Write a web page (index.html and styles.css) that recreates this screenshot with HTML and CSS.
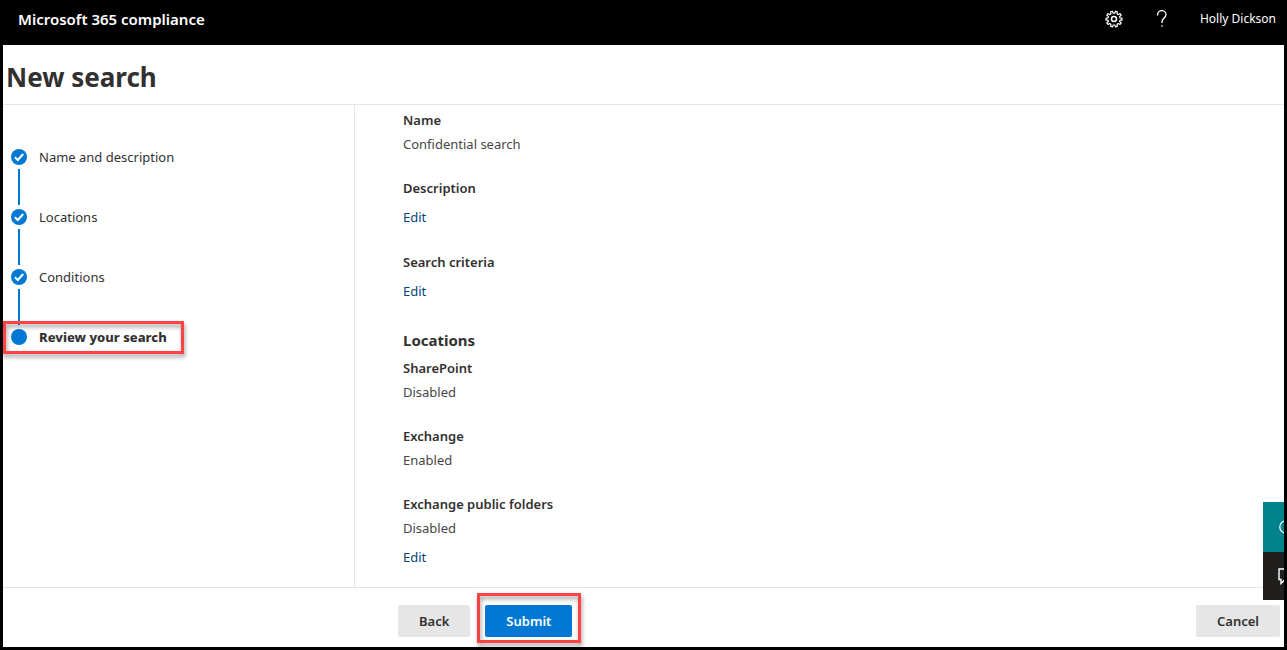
FILE: index.html
```html
<!DOCTYPE html>
<html lang="en">
<head>
<meta charset="utf-8">
<meta name="viewport" content="width=device-width, initial-scale=1">
<title>New search - Microsoft 365 compliance</title>
<link rel="stylesheet" href="styles.css">
</head>
<body>
<header class="topbar">
  <span class="brand">Microsoft 365 compliance</span>
  <button class="icon-button" type="button" aria-label="Settings">
    <svg class="gear" viewBox="0 0 18 18" width="18" height="18" fill="none" stroke="currentColor" stroke-linejoin="round">
      <circle cx="9" cy="9" r="2.5" stroke-width="1.5"/>
      <path stroke-width="1.2" d="M7.6 1.2 8 3.2 10 3.2 10.4 1.2 12.4 1.8 12 3.8 13.2 4.7 15 3.6 16.2 5.3 14.6 6.6 15 8 17 8 17 10.1 15 10.2 14.5 11.6 16.2 12.8 15 14.5 13.2 13.5 12 14.4 12.4 16.3 10.4 16.9 10 15 8 15 7.6 16.9 5.6 16.3 6 14.4 4.8 13.5 3 14.5 1.8 12.8 3.5 11.6 3 10.2 1 10.1 1 8 3 8 3.4 6.6 1.8 5.3 3 3.6 4.8 4.7 6 3.8 5.6 1.8Z"/>
    </svg>
  </button>
  <button class="icon-button" type="button" aria-label="Help">
    <svg viewBox="0 0 18 18" width="18" height="18" fill="none" stroke="currentColor" stroke-width="1.3">
      <path d="M4.6 5.4V4.6A4.2 4 0 0 1 13 4.6C13 8 9 8.4 9 11.4V13M9 15.2V16.8"/>
    </svg>
  </button>
  <button class="account" type="button">Holly Dickson</button>
</header>

<div class="page">
  <h1 class="page-title">New search</h1>

  <div class="wizard">
    <nav class="steps-panel" aria-label="Progress">
      <ol class="steps">
        <li class="step">
          <svg class="marker" viewBox="0 0 16 16"><circle cx="8" cy="8" r="8"/><path d="M3.8 8.2 6.8 11 12.2 5"/></svg>
          <span>Name and description</span>
        </li>
        <li class="step">
          <svg class="marker" viewBox="0 0 16 16"><circle cx="8" cy="8" r="8"/><path d="M3.8 8.2 6.8 11 12.2 5"/></svg>
          <span>Locations</span>
        </li>
        <li class="step">
          <svg class="marker" viewBox="0 0 16 16"><circle cx="8" cy="8" r="8"/><path d="M3.8 8.2 6.8 11 12.2 5"/></svg>
          <span>Conditions</span>
        </li>
        <li class="step step-current" aria-current="step">
          <svg class="marker" viewBox="0 0 16 16"><circle cx="8" cy="8" r="8"/></svg>
          <span>Review your search</span>
        </li>
      </ol>
    </nav>

    <main class="review">
      <section class="group">
        <h3 class="label">Name</h3>
        <p class="value">Confidential search</p>
      </section>
      <section class="group">
        <h3 class="label">Description</h3>
        <a class="edit" href="#">Edit</a>
      </section>
      <section class="group">
        <h3 class="label">Search criteria</h3>
        <a class="edit" href="#">Edit</a>
      </section>
      <h2 class="heading">Locations</h2>
      <section class="group">
        <h3 class="label">SharePoint</h3>
        <p class="value">Disabled</p>
      </section>
      <section class="group">
        <h3 class="label">Exchange</h3>
        <p class="value">Enabled</p>
      </section>
      <section class="group">
        <h3 class="label">Exchange public folders</h3>
        <p class="value">Disabled</p>
        <a class="edit" href="#">Edit</a>
      </section>
    </main>
  </div>

  <footer class="actions">
    <button class="button" type="button">Back</button>
    <span class="submit-wrap"><button class="button button-primary" type="submit">Submit</button></span>
    <button class="button button-cancel" type="button">Cancel</button>
  </footer>

  <aside class="side-tabs">
    <button class="side-tab help-tab" type="button" aria-label="Need help">
      <svg viewBox="0 0 18 18" width="16" height="16"><circle cx="9" cy="9" r="7"/></svg>
    </button>
    <button class="side-tab feedback-tab" type="button" aria-label="Give feedback">
      <svg viewBox="0 0 18 18" width="18" height="18"><path d="M1 2H17V12.5H7L3 16.5V12.5H1Z"/></svg>
    </button>
  </aside>
</div>
</body>
</html>
```
FILE: styles.css
```css
*,
*::before,
*::after {
  box-sizing: border-box;
}

body {
  margin: 0;
  min-height: 100vh;
  display: flex;
  flex-direction: column;
  background: #000;
  color: #323130;
  font: 13px/20px "Noto Sans", "Open Sans", sans-serif;
}

h1, h2, h3, p, ol {
  margin: 0;
  padding: 0;
}

button {
  font: inherit;
  color: inherit;
  border: 0;
  cursor: pointer;
}

.topbar {
  display: flex;
  align-items: center;
  height: 45px;
  padding: 0 11px 8px 18px;
  color: #fff;
}

.brand {
  margin-right: auto;
  font-size: 15px;
  font-weight: 600;
}

.icon-button {
  display: flex;
  justify-content: center;
  width: 48px;
  padding: 0;
  background: none;
}

.account {
  margin-left: 14px;
  padding: 0;
  background: none;
  font-size: 12px;
}

.page {
  position: relative;
  flex: 1;
  display: flex;
  flex-direction: column;
  margin: 0 3px 3px;
  overflow: hidden;
  background: #fff;
}

.page-title {
  padding: 17px 3px 11px;
  border-bottom: 1px solid #e6e6e6;
  font-size: 26px;
  line-height: 31px;
  font-weight: 700;
}

.wizard {
  flex: 1;
  display: grid;
  grid-template-columns: 352px 1fr;
}

.steps-panel {
  padding: 44px 0 0 8px;
  border-right: 1px solid #e6e6e6;
}

.steps {
  list-style: none;
}

.step {
  position: relative;
  display: grid;
  grid-template-columns: 16px 1fr;
  column-gap: 12px;
  line-height: 16px;
}

.step:not(:last-child)::after {
  content: "";
  justify-self: center;
  width: 2px;
  height: 36px;
  margin: 4px 0;
  background: #0078d4;
}

.step-current {
  font-weight: 800;
}

.step-current::before {
  content: "";
  position: absolute;
  left: -8px;
  top: -8px;
  width: 181px;
  height: 33px;
  border: 3px solid #ff4343;
  filter: drop-shadow(1px 3px 2px rgba(0, 0, 0, 0.4));
}

.marker {
  width: 16px;
  height: 16px;
  fill: #0078d4;
}

.marker path {
  fill: none;
  stroke: #fff;
  stroke-width: 2;
}

.review {
  padding: 5px 48px 0;
}

.group {
  margin-bottom: 24px;
}

.group:last-child {
  margin-bottom: 20px;
}

.label {
  font-size: 13px;
  font-weight: 600;
}

.value {
  margin-top: 4px;
  color: #484644;
}

.edit {
  display: block;
  width: fit-content;
  margin: 9px 0 25px;
  color: #004578;
  text-decoration: none;
}

.group:has(.edit) {
  margin-bottom: 0;
}

.group:last-child .edit {
  margin-bottom: 20px;
}

.heading {
  margin: 27px 0 6px;
  font-size: 15px;
  line-height: 24px;
  font-weight: 700;
}

.actions {
  display: flex;
  align-items: center;
  gap: 15px;
  min-height: 60px;
  padding: 6px 4px 0 395px;
  border-top: 1px solid #e6e6e6;
}

.button {
  height: 32px;
  padding: 0 21px;
  border-radius: 2px;
  background: #e6e6e6;
  font-weight: 600;
}

.button-primary {
  background: #0078d4;
  color: #fff;
}

.button-cancel {
  margin-left: auto;
}

.submit-wrap {
  position: relative;
}

.submit-wrap::after {
  content: "";
  position: absolute;
  inset: -12px -9px -6px -8px;
  border: 3px solid #ff4343;
  filter: drop-shadow(1px 3px 2px rgba(0, 0, 0, 0.4));
  pointer-events: none;
}

.side-tabs {
  position: absolute;
  right: 0;
  bottom: 47px;
  width: 21px;
  overflow: hidden;
  color: #fff;
}

.side-tab {
  display: flex;
  align-items: center;
  width: 50px;
  height: 50px;
  padding: 0 15px;
}

.side-tab svg {
  flex: none;
  fill: none;
  stroke: #fff;
  stroke-width: 1.4;
}

.help-tab {
  background: #00838c;
}

.feedback-tab {
  height: 48px;
  background: #201f1e;
}
```
